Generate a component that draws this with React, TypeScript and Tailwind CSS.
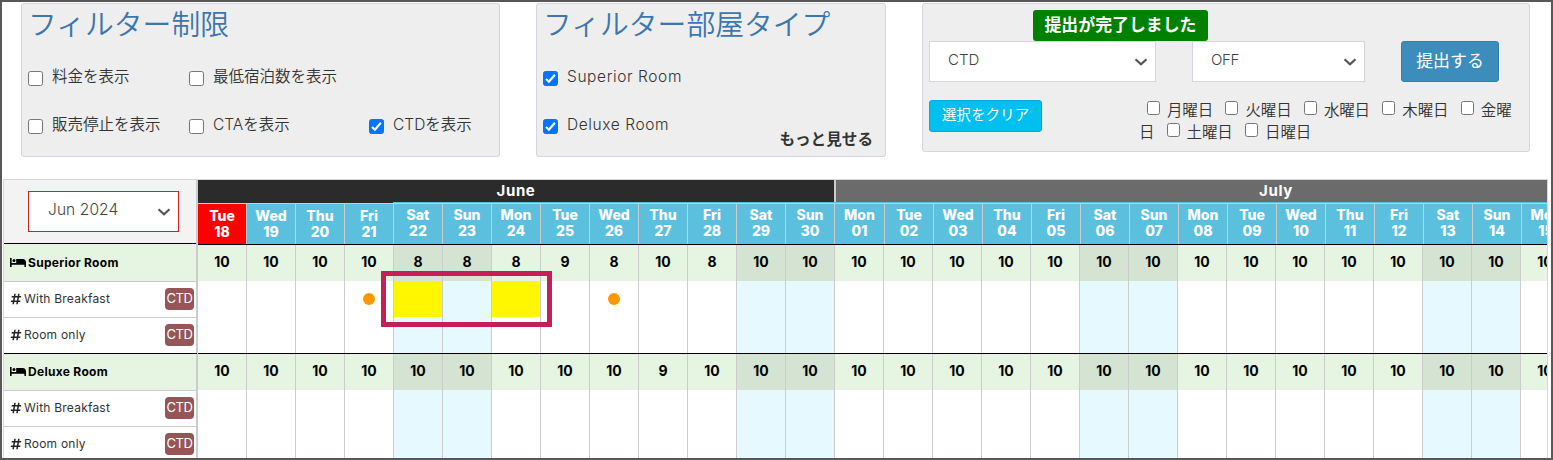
import React from 'react';
import { FaHashtag } from 'react-icons/fa';

const days = ['Tue', 'Wed', 'Thu', 'Fri', 'Sat', 'Sun', 'Mon'];
const juneDates = ['18', '19', '20', '21', '22', '23', '24', '25', '26', '27', '28', '29', '30'];
const julyDates = ['01', '02', '03', '04', '05', '06', '07', '08', '09', '10', '11', '12', '13', '14', '15'];
const columns = [...juneDates, ...julyDates].map((date, i) => ({ date, day: days[i % 7] }));
const superior = [10, 10, 10, 10, 8, 8, 8, 9, 8, 10, 8];
const deluxe = [10, 10, 10, 10, 10, 10, 10, 10, 10, 9, 10];

function Check({ on = false, small = false }: { on?: boolean; small?: boolean }) {
  const size = small ? 'h-[14px] w-[13px]' : 'h-[15px] w-[15px]';
  return (
    <span className={`${size} flex shrink-0 items-center justify-center rounded-[2.5px] border ${on ? 'border-[#0075ff] bg-[#0075ff]' : 'border-[#767676] bg-white'}`}>
      {on && (
        <svg viewBox="0 0 13 13" className="h-[13px] w-[13px]" fill="none" stroke="white" strokeWidth="2.1">
          <path d="M2 7.1 4.9 9.8 10.9 2.7" />
        </svg>
      )}
    </span>
  );
}

function Option({ label, on, cls }: { label: string; on?: boolean; cls: string }) {
  return (
    <label className={`flex h-[24px] items-center ${cls}`}>
      <span className="mt-[3px] flex"><Check on={on} /></span>
      <span className="ml-[9px] whitespace-nowrap">{label}</span>
    </label>
  );
}

function Chevron() {
  return (
    <svg viewBox="0 0 14 8" className="h-[8px] w-[14px] shrink-0" fill="none" stroke="#555" strokeWidth="2.2">
      <path d="M1.5 1.2 7 6.3 12.5 1.2" />
    </svg>
  );
}

function BedIcon() {
  return (
    <svg viewBox="0 0 16 9" className="-mt-px h-[9px] w-[16px] shrink-0" fill="currentColor">
      <path d="M0 0h1.6v5h12.8V4.2H16V9h-1.6V6.8H1.6V9H0z" />
      <circle cx="4" cy="2.6" r="1.5" />
      <path d="M6.2 1h6.6C14.700 1 16 2.300 16 4.200V5H6.2z" />
    </svg>
  );
}

function Weekday({ label }: { label: string }) {
  return (
    <span className="flex items-start">
      <Check small />
      <span className="ml-[7px] mt-px whitespace-nowrap leading-[17px]">{label}</span>
    </span>
  );
}

function Rate({ name, last = false }: { name: string; last?: boolean }) {
  return (
    <div className={`flex h-[36px] shrink-0 items-center pl-[6px] pr-[2px] ${last ? 'pb-px' : 'border-b border-[#ccc]'}`}>
      <FaHashtag className="-mt-px h-[12px] w-[12px] text-[#222]" />
      <span className="-mt-[2px] ml-[2px] grow whitespace-nowrap text-[12px] tracking-[0.22px] text-[#333]">{name}</span>
      <span className="-mt-px flex h-[22px] w-[29px] items-center justify-center rounded-[4px] bg-[#965556] text-[13px] tracking-[-0.5px] text-white">CTD</span>
    </div>
  );
}

function Room({ name, cls }: { name: string; cls: string }) {
  return (
    <div className={`flex shrink-0 items-center border-b border-[#ccc] bg-[#e6f4e2] pl-[6px] text-black ${cls}`}>
      <BedIcon />
      <span className="ml-[2px] whitespace-nowrap text-[12px] font-bold tracking-[0.3px]">{name}</span>
    </div>
  );
}

export default function App() {
  return (
    <div className="flex h-[460px] w-[1553px] flex-col overflow-hidden border-2 border-[#595757] bg-white font-[Inter,'Noto_Sans_CJK_JP',sans-serif] text-[#333]">
      <div className="flex h-[177px] shrink-0 items-start pl-[19px] pt-px">
        <section className="h-[154px] w-[479px] rounded-[3px] border border-[#d2d6de] bg-[#eee] pl-[6px]">
          <h2 className="h-[42px] whitespace-nowrap text-[28.8px] font-[350] leading-[41px] text-[#3c76ad]">フィルター制限</h2>
          <div className="mt-[19px] flex text-[15.5px] font-[350]">
            <Option label="料金を表示" cls="w-[161px]" />
            <Option label="最低宿泊数を表示" cls="w-[180px]" />
          </div>
          <div className="mt-[24px] flex text-[15.5px] font-[350]">
            <Option label="販売停止を表示" cls="w-[161px]" />
            <Option label="CTAを表示" cls="w-[180px]" />
            <Option label="CTDを表示" on cls="" />
          </div>
        </section>

        <section className="ml-[36px] h-[154px] w-[350px] rounded-[3px] border border-[#d2d6de] bg-[#eee] pl-[6px]">
          <h2 className="h-[42px] whitespace-nowrap text-[28.8px] font-[350] leading-[41px] text-[#3c76ad]">フィルター部屋タイプ</h2>
          <div className="mt-[19px] text-[15.5px] font-[350] tracking-[0.6px]"><Option label="Superior Room" on cls="" /></div>
          <div className="mt-[24px] text-[15.5px] font-[350] tracking-[0.6px]"><Option label="Deluxe Room" on cls="" /></div>
          <div className="-mt-[7px] mr-[12px] text-right text-[15.6px] font-bold leading-[20px]">もっと見せる</div>
        </section>

        <section className="ml-[36px] h-[149px] w-[608px] rounded-[3px] border border-[#d2d6de] bg-[#eee] pl-[6px] pt-[6px]">
          <div className="ml-[104px] flex h-[31px] w-[175px] items-center justify-center whitespace-nowrap rounded-[3px] bg-[#008000] text-[16.9px] font-bold text-white">提出が完了しました</div>
          <div className="flex text-[15px] font-[350] text-[#444]">
            <div className="flex h-[41px] w-[227px] items-center justify-between border border-[#d2d6de] bg-white pl-[18px] pr-[7px]">
              <span className="-mt-[3px]">CTD</span><Chevron />
            </div>
            <div className="ml-[36px] flex h-[41px] w-[173px] items-center justify-between border border-[#d2d6de] bg-white pl-[18px] pr-[7px]">
              <span className="-mt-[3px] tracking-[-0.3px]">OFF</span><Chevron />
            </div>
            <button className="ml-[36px] h-[41px] w-[98px] rounded-[3px] border border-[#367fa9] bg-[#3c8dbc] text-[16.9px] font-normal text-white">提出する</button>
          </div>
          <div className="mt-[18px] flex">
            <button className="h-[32px] w-[113px] whitespace-nowrap rounded-[3px] border border-[#00acd6] bg-[#00c0ef] text-[14.6px] text-white">選択をクリア</button>
            <div className="ml-[98px] mt-[1px] text-[15.5px] font-[350]">
              <div className="flex h-[22px] items-start gap-[12.4px] pl-[7px] tracking-[-0.15px]">
                {['月曜日', '火曜日', '水曜日', '木曜日', '金曜'].map((d) => <Weekday key={d} label={d} />)}
              </div>
              <div className="-ml-px flex h-[22px] items-start gap-[12.6px] tracking-[-0.2px]">
                <span className="mt-px w-[15px] leading-[17px]">日</span>
                <Weekday label="土曜日" />
                <Weekday label="日曜日" />
              </div>
            </div>
          </div>
        </section>
      </div>

      <div className="ml-px flex h-[279px] w-[1545px] overflow-hidden border-x border-t border-[#d8d8d8]">
        <aside className="flex w-[194px] shrink-0 flex-col border-r-2 border-[#ccc]">
          <div className="h-[64px] shrink-0 border-b border-black bg-[#f3f3f3] pl-[24px] pt-[11px]">
            <div className="flex h-[41px] w-[151px] items-center justify-between border border-[#cf2222] bg-white pl-[19px] pr-[7px] text-[15.5px] font-[350] text-[#444]">
              <span className="-mt-[4px] whitespace-nowrap tracking-[0.1px]">Jun 2024</span><Chevron />
            </div>
          </div>
          <Room name="Superior Room" cls="h-[38px]" />
          <Rate name="With Breakfast" />
          <Rate name="Room only" last />
          <div className="-mt-px h-px w-[193px] shrink-0 bg-black" />
          <Room name="Deluxe Room" cls="h-[37px]" />
          <Rate name="With Breakfast" />
          <Rate name="Room only" last />
        </aside>

        <div className="w-[1349px] shrink-0 overflow-hidden">
          <div className="flex text-center text-[15px] font-bold leading-[21px] tracking-[0.6px] text-white">
            <div className="h-[22px] w-[636px] shrink-0 bg-[#2b2b2b]">June</div>
            <div className="h-[22px] w-[882px] shrink-0 border-l-2 border-[#ccc] bg-[#6b6b6b]">July</div>
          </div>
          <div className="flex h-px">
            <div className="w-[195px] shrink-0 bg-[#2b2b2b]" />
            <div className="grow bg-[#5bc0de]" />
          </div>
          <div className="flex border-b border-black">
            {columns.map((c, i) => (
              <div key={i} className={`h-[41px] shrink-0 border-r border-t border-[#ccc] text-center text-[14px] font-extrabold leading-[16px] text-white ${i === 13 ? 'w-[50px]' : 'w-[49px]'} ${i === 0 ? 'bg-[#f00]' : 'bg-[#5bc0de]'} ${i < 4 ? 'pt-[4px]' : 'pt-[3px]'}`}>
                {c.day}<br />{c.date}
              </div>
            ))}
          </div>
          <div className="flex">
            {columns.map((c, i) => {
              const weekend = c.day === 'Sat' || c.day === 'Sun';
              const green = weekend ? 'bg-[#d5e3d2]' : 'bg-[#e6f4e2]';
              const plain = weekend ? 'bg-[#e6f9fe]' : 'bg-white';
              return (
                <div key={i} className={`flex h-[215px] w-[49px] shrink-0 flex-col border-r border-[#ccc] text-center text-[14px] font-bold leading-[34px] text-black ${plain}`}>
                  <div className={`h-[36px] shrink-0 ${green}`}>{superior[i] ?? 10}</div>
                  <div className={`flex h-[36px] shrink-0 items-center justify-center ${i === 4 || i === 6 ? 'bg-[#fff700]' : plain}`}>
                    {(i === 3 || i === 8) && <span className="h-[12px] w-[12px] rounded-full bg-[#ff9800]" />}
                  </div>
                  <div className={`h-[36px] shrink-0 ${plain}`} />
                  <div className="-mr-px h-px w-[49px] shrink-0 bg-black" />
                  <div className={`h-[36px] shrink-0 ${green}`}>{deluxe[i] ?? 10}</div>
                </div>
              );
            })}
          </div>
        </div>
      </div>

      <div className="pointer-events-none absolute left-[381px] top-[271px] h-[56px] w-[171px] border-[5px] border-[#c42058]" />
    </div>
  );
}
